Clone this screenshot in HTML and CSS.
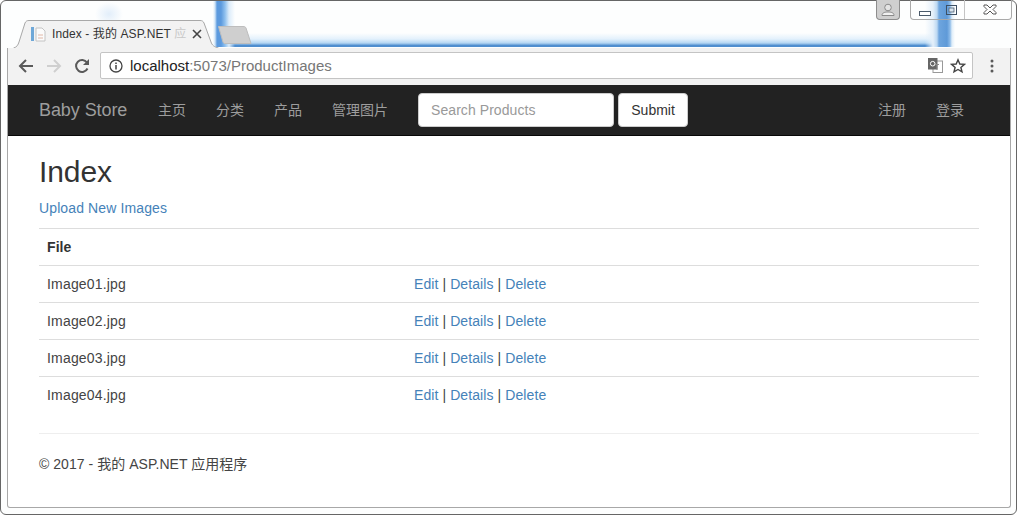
FILE: index.html
```html
<!DOCTYPE html>
<html lang="zh">
<head>
<meta charset="utf-8">
<title>Index - 我的 ASP.NET 应用程序</title>
<link rel="stylesheet" href="styles.css">
</head>
<body>
<div class="window">
  <div class="titlebar">
    <div class="tabstrip">
      <div class="tab">
        <svg class="tab-shape" width="206" height="28" viewBox="0 0 206 28"><path d="M0.5 28 C4 27 5 25 6 22 L12 3 C13 1 14 .5 16 .5 H187 C189 .5 190 1 191 3 L198 22 C199 25 201 27 205.5 28" fill="#f2f2f2" stroke="#a8a8a8"/></svg>
        <svg class="favicon" width="16" height="16" viewBox="0 0 16 16"><rect x="0" y="1" width="3" height="14" fill="#6fa8d8"/><path d="M5 2h6l3 3v10H5z" fill="#fbfbfb" stroke="#c4c4c4"/><path d="M7 9h5M7 12h5" stroke="#e0b8a8"/></svg>
        <span class="tab-title">Index - 我的 ASP.NET <span class="tab-fade">应</span></span>
        <svg class="tab-close" width="10" height="10" viewBox="0 0 10 10"><path d="M1 1l8 8M9 1l-8 8" stroke="#444" stroke-width="1.6"/></svg>
      </div>
      <svg class="newtab" width="34" height="18" viewBox="0 0 34 18"><path d="M.5 .5H25C27 .5 27.500 1 28 2L33 17.500H7C6 17.500 5.500 17 5 16Z" fill="#cfcfcf" stroke="#bdbdbd"/></svg>
    </div>
    <div class="sysbtns">
      <div class="profile"><svg width="16" height="14" viewBox="0 0 16 14"><circle cx="8" cy="4.500" r="3.300" fill="#e4e4e4" stroke="#8a8a8a"/><path d="M2 12.500c0-3 3-3.500 6-3.500s6 .5 6 3.500z" fill="#f0f0f0" stroke="#8a8a8a"/></svg></div>
      <div class="winctl">
        <div class="ctl ctl-min"><svg width="12" height="5" viewBox="0 0 12 5"><rect x=".5" y=".5" width="11" height="4" fill="#fff" stroke="#4a5a6a"/></svg></div>
        <div class="ctl ctl-max"><svg width="11" height="10" viewBox="0 0 11 10"><rect x=".5" y=".5" width="10" height="9" fill="none" stroke="#3d4f63"/><rect x="3" y="3" width="5" height="4" fill="#d8e4ee" stroke="#3d4f63" stroke-width=".7"/></svg></div>
        <div class="ctl ctl-close"><svg width="14" height="11" viewBox="0 0 14 11"><path d="M1 1h3l3 3 3-3h3v1.500L10 5.500l3 3V10h-3L7 7l-3 3H1V8.500l3-3-3-3z" fill="#fff" stroke="#555"/></svg></div>
      </div>
    </div>
  </div>

  <div class="page-frame">
    <div class="toolbar">
      <svg class="tool" width="16" height="16" viewBox="0 0 16 16"><path d="M15 8H2M8 2L2 8l6 6" fill="none" stroke="#5a5a5a" stroke-width="2"/></svg>
      <svg class="tool" width="16" height="16" viewBox="0 0 16 16"><path d="M1 8h13M8 2l6 6-6 6" fill="none" stroke="#cfcfcf" stroke-width="2"/></svg>
      <svg class="tool" width="16" height="16" viewBox="0 0 16 16"><path d="M13.500 10.500A6 6 0 1 1 13 4.500" fill="none" stroke="#5a5a5a" stroke-width="2"/><path d="M15 1v6H9z" fill="#5a5a5a"/></svg>
      <div class="omnibox">
        <svg class="info" width="14" height="14" viewBox="0 0 14 14"><circle cx="7" cy="7" r="6" fill="none" stroke="#444" stroke-width="1.300"/><path d="M7 6v4.500M7 3.500v1.400" stroke="#444" stroke-width="1.500"/></svg>
        <span class="url"><span class="url-host">localhost</span>:5073/ProductImages</span>
        <svg class="translate" width="15" height="15" viewBox="0 0 15 15"><rect x="5" y="3" width="9.500" height="11.500" fill="#fff" stroke="#999"/><rect x="0" y="0" width="9.500" height="11.500" fill="#666"/><path d="M7.500 6.500H11M9 6v6" stroke="#888"/><circle cx="4.700" cy="5.700" r="2.300" fill="none" stroke="#fff"/></svg>
        <svg class="star" width="16" height="16" viewBox="0 0 16 16"><path d="M8 1.800l1.800 4.200 4.600.4-3.500 3 1.100 4.500L8 11.500l-4 2.400 1.100-4.500-3.500-3 4.600-.4z" fill="none" stroke="#444" stroke-width="1.400"/></svg>
      </div>
      <svg class="menu" width="4" height="14" viewBox="0 0 4 14"><circle cx="2" cy="2" r="1.500" fill="#5a5a5a"/><circle cx="2" cy="7" r="1.500" fill="#5a5a5a"/><circle cx="2" cy="12" r="1.500" fill="#5a5a5a"/></svg>
    </div>

    <nav class="navbar">
      <a class="brand" href="#">Baby Store</a>
      <a class="nav-link" href="#">主页</a>
      <a class="nav-link" href="#">分类</a>
      <a class="nav-link" href="#">产品</a>
      <a class="nav-link" href="#">管理图片</a>
      <form class="search">
        <input class="search-input" type="text" placeholder="Search Products">
        <button class="search-btn" type="button">Submit</button>
      </form>
      <div class="nav-right">
        <a class="nav-link" href="#">注册</a>
        <a class="nav-link" href="#">登录</a>
      </div>
    </nav>

    <main class="content">
      <h2 class="heading">Index</h2>
      <p class="upload"><a href="#">Upload New Images</a></p>
      <table class="table">
        <colgroup><col class="col-file"><col></colgroup>
        <thead><tr><th>File</th><th></th></tr></thead>
        <tbody>
          <tr><td class="cell-file">Image01.jpg</td><td><a href="#">Edit</a> | <a href="#">Details</a> | <a href="#">Delete</a></td></tr>
          <tr><td class="cell-file">Image02.jpg</td><td><a href="#">Edit</a> | <a href="#">Details</a> | <a href="#">Delete</a></td></tr>
          <tr><td class="cell-file">Image03.jpg</td><td><a href="#">Edit</a> | <a href="#">Details</a> | <a href="#">Delete</a></td></tr>
          <tr><td class="cell-file">Image04.jpg</td><td><a href="#">Edit</a> | <a href="#">Details</a> | <a href="#">Delete</a></td></tr>
        </tbody>
      </table>
      <hr class="rule">
      <footer class="footer">© 2017 - 我的 ASP.NET 应用程序</footer>
    </main>
  </div>
</div>
</body>
</html>
```

FILE: styles.css
```css
* { box-sizing: border-box; }
html, body { margin: 0; padding: 0; }
body {
  width: 1017px;
  height: 515px;
  overflow: hidden;
  font-family: "Liberation Sans", "Noto Sans CJK SC", sans-serif;
  font-size: 14px;
  line-height: 20px;
  color: #444;
  background: #fff;
}
a { color: #4582b9; text-decoration: none; }

.window {
  width: 1017px;
  height: 515px;
  padding: 0 5px 6px 6px;
  border: 1px solid #666;
  border-radius: 6px;
  display: flex;
  flex-direction: column;
  background:
    linear-gradient(90deg, transparent 0, #e5f0fa 8px, #bcd8f2 12px, #6ea5de 14px, #5f9ad8 22px, #8dbbe8 25px, #e0eef9 27px, transparent 30px) 924px 0 / 30px 46px no-repeat,
    linear-gradient(90deg, transparent 0, #cfe4f7 2px, #5c9ade 4px, #5c9ade 8px, #8fc0ee 12px, #dcecfa 16px, transparent 22px) 212px 0 / 22px 46px no-repeat,
    linear-gradient(180deg, transparent 32px, #e3f1fc 38px, #b4d6f3 42px, #4f8ecf 44.500px, #4f8ecf 46px, transparent 46px) 216px 0 / 722px 47px no-repeat,
    radial-gradient(ellipse 14px 12px at 50% 50%, #e2eefa, transparent) 86px 0 / 44px 26px no-repeat,
    #fdfefe;
}

.titlebar {
  height: 47px;
  flex: none;
  margin-right: -1px;
  display: flex;
  justify-content: space-between;
}
.tabstrip {
  display: flex;
  align-items: flex-end;
  padding-left: 6px;
}
.tab {
  position: relative;
  width: 206px;
  height: 28px;
  display: flex;
  align-items: center;
  padding: 0 0 0 18px;
  font-size: 12px;
  color: #333;
  white-space: nowrap;
}
.tab-shape { position: absolute; left: 0; top: 0; }
.favicon { position: relative; flex: none; margin-right: 5px; }
.tab-title {
  position: relative;
  width: 132px;
  margin-right: 8px;
  letter-spacing: .1px;
}
.tab-fade { color: #c8c8c8; }
.tab-close { position: relative; flex: none; }
.newtab { margin-left: -1px; margin-bottom: 4px; }

.sysbtns {
  display: flex;
  align-items: flex-start;
  gap: 10px;
}
.profile {
  width: 24px;
  height: 20px;
  margin-top: -1px;
  background: #cfcfcf;
  border: 1px solid #8d8d8d;
  border-top: 0;
  border-radius: 0 0 4px 4px;
  display: flex;
  align-items: center;
  justify-content: center;
}
.winctl {
  width: 102px;
  height: 20px;
  margin-top: -1px;
  display: flex;
  border: 1px solid #a9a9a9;
  border-top: 0;
  border-radius: 0 0 4px 4px;
}
.ctl { display: flex; justify-content: center; align-items: center; }
.ctl-min { width: 28px; align-items: flex-end; padding-bottom: 3px; }
.ctl-max { width: 26px; border-right: 1px solid #c4c4c4; }
.ctl-close { flex: 1; padding-left: 3px; }

.page-frame {
  flex: 1;
  min-height: 0;
  display: flex;
  flex-direction: column;
  background: #fff;
  border: 1px solid #a8a8a8;
  border-top: 0;
  border-radius: 0 0 3px 3px;
}
.toolbar {
  height: 37px;
  flex: none;
  display: flex;
  align-items: center;
  padding: 0 0 2px 10px;
  background: #f2f2f2;
}
.tool { flex: none; margin-right: 12px; }
.omnibox {
  width: 873px;
  height: 27px;
  margin: 0 0 0 -2px;
  padding: 0 6px 0 8px;
  display: flex;
  align-items: center;
  background: #fff;
  border: 1px solid #c4c4c4;
  border-radius: 2px;
  font-size: 15px;
}
.info { flex: none; margin-right: 7px; }
.url { flex: 1; color: #777; }
.url-host { color: #222; }
.translate { flex: none; margin-right: 7px; }
.star { flex: none; }
.menu { flex: none; margin-left: 17px; }

.navbar {
  height: 51px;
  flex: none;
  display: flex;
  align-items: center;
  padding: 0 31px;
  background: #222;
  border-bottom: 1px solid #080808;
}
.brand {
  font-size: 18px;
  letter-spacing: -.08px;
  color: #9d9d9d;
  padding-right: 15.800px;
}
.nav-link {
  color: #9d9d9d;
  padding: 0 15px;
}
.search {
  display: flex;
  gap: 4px;
  margin-left: 15px;
}
.search-input {
  width: 196px;
  height: 34px;
  padding: 6px 12px;
  font: inherit;
  letter-spacing: .06px;
  color: #555;
  background: #fff;
  border: 1px solid #ccc;
  border-radius: 4px;
}
.search-input::placeholder { color: #999; opacity: 1; }
.search-btn {
  width: 70px;
  height: 34px;
  padding: 0;
  font: inherit;
  color: #333;
  background: #fff;
  border: 1px solid #ccc;
  border-radius: 4px;
}
.nav-right {
  margin-left: auto;
  display: flex;
}

.content { padding: 0 31px; }
.heading {
  margin: 19px 0 10px;
  font-size: 30px;
  font-weight: 500;
  line-height: 33px;
  color: #333;
  letter-spacing: -.1px;
}
.upload { margin: 0 0 10px; letter-spacing: .12px; }
.table {
  width: 940px;
  border-collapse: collapse;
  table-layout: fixed;
  margin-bottom: 19px;
  letter-spacing: .09px;
}
.col-file { width: 367px; }
.table th, .table td {
  padding: 8px;
  text-align: left;
  border-top: 1px solid #ddd;
  height: 37px;
}
.table th { font-weight: 700; color: #333; }
.table .cell-file { letter-spacing: .18px; }
.rule {
  margin: 19px 0 20px;
  border: 0;
  border-top: 1px solid #eee;
}
.footer { letter-spacing: .04px; }
```
